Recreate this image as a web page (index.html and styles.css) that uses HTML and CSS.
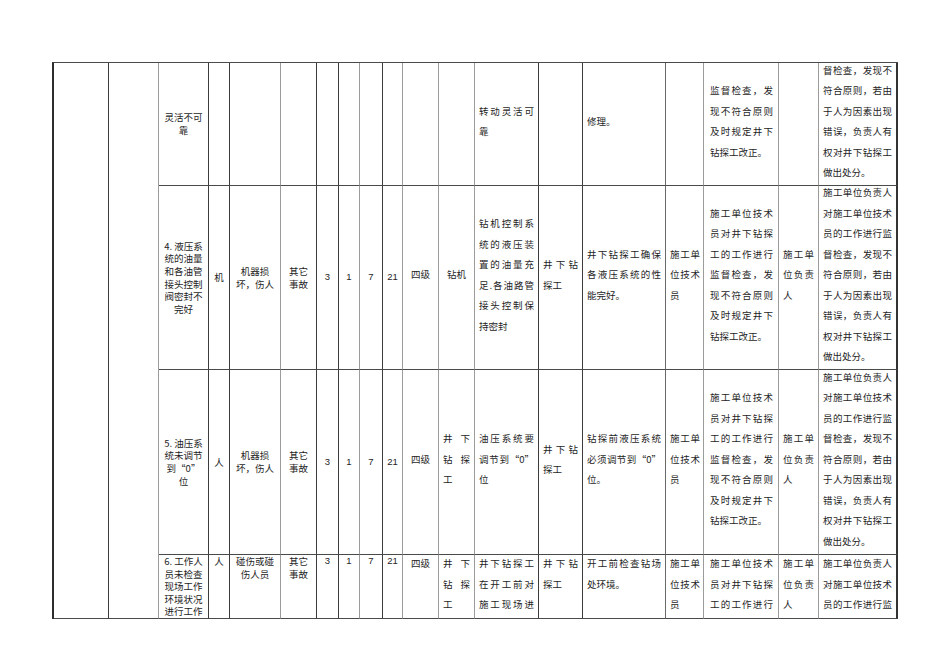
FILE: index.html
```html
<!DOCTYPE html>
<html lang="zh-CN">
<head>
<meta charset="utf-8">
<title>危险源辨识表</title>
<link rel="stylesheet" href="styles.css">
</head>
<body>
<div class="sheet">
  <div class="grid">
    <div class="c span"></div>
    <div class="c span"></div>

    <!-- row 1 -->
    <div class="c"><p class="t">灵活不可<br>靠</p></div>
    <div class="c"></div>
    <div class="c"></div>
    <div class="c"></div>
    <div class="c"></div>
    <div class="c"></div>
    <div class="c"></div>
    <div class="c"></div>
    <div class="c"></div>
    <div class="c"></div>
    <div class="c"><p class="l">转动灵活可靠</p></div>
    <div class="c"></div>
    <div class="c"><p class="l">修理。</p></div>
    <div class="c"></div>
    <div class="c"><p class="l">监督检查，发现不符合原则及时规定井下钻探工改正。</p></div>
    <div class="c"></div>
    <div class="c"><p class="l">督检查，发现不符合原则，若由于人为因素出现错误，负责人有权对井下钻探工做出处分。</p></div>

    <!-- row 2 -->
    <div class="c"><p class="t">4. 液压系<br>统的油量<br>和各油管<br>接头控制<br>阀密封不<br>完好</p></div>
    <div class="c"><p class="t">机</p></div>
    <div class="c"><p class="t">机器损<br>坏，伤人</p></div>
    <div class="c"><p class="t">其它<br>事故</p></div>
    <div class="c"><p class="n">3</p></div>
    <div class="c"><p class="n">1</p></div>
    <div class="c"><p class="n">7</p></div>
    <div class="c"><p class="n">21</p></div>
    <div class="c"><p class="l mid">四级</p></div>
    <div class="c"><p class="l mid">钻机</p></div>
    <div class="c"><p class="l">钻机控制系统的液压装置的油量充足.各油路管接头控制保持密封</p></div>
    <div class="c"><p class="l">井下钻探工</p></div>
    <div class="c"><p class="l">井下钻探工确保各液压系统的性能完好。</p></div>
    <div class="c"><p class="l">施工单位技术员</p></div>
    <div class="c"><p class="l">施工单位技术员对井下钻探工的工作进行监督检查，发现不符合原则及时规定井下钻探工改正。</p></div>
    <div class="c"><p class="l">施工单位负责人</p></div>
    <div class="c"><p class="l">施工单位负责人对施工单位技术员的工作进行监督检查，发现不符合原则，若由于人为因素出现错误，负责人有权对井下钻探工做出处分。</p></div>

    <!-- row 3 -->
    <div class="c"><p class="t">5. 油压系<br>统未调节<br>到“0”<br>位</p></div>
    <div class="c"><p class="t">人</p></div>
    <div class="c"><p class="t">机器损<br>坏，伤人</p></div>
    <div class="c"><p class="t">其它<br>事故</p></div>
    <div class="c"><p class="n">3</p></div>
    <div class="c"><p class="n">1</p></div>
    <div class="c"><p class="n">7</p></div>
    <div class="c"><p class="n">21</p></div>
    <div class="c"><p class="l mid">四级</p></div>
    <div class="c"><p class="l">井下钻探工</p></div>
    <div class="c"><p class="l">油压系统要调节到“0”位</p></div>
    <div class="c"><p class="l">井下钻探工</p></div>
    <div class="c"><p class="l">钻探前液压系统必须调节到“0”位。</p></div>
    <div class="c"><p class="l">施工单位技术员</p></div>
    <div class="c"><p class="l">施工单位技术员对井下钻探工的工作进行监督检查，发现不符合原则及时规定井下钻探工改正。</p></div>
    <div class="c"><p class="l">施工单位负责人</p></div>
    <div class="c"><p class="l">施工单位负责人对施工单位技术员的工作进行监督检查，发现不符合原则，若由于人为因素出现错误，负责人有权对井下钻探工做出处分。</p></div>

    <!-- row 4 (continues on the next page) -->
    <div class="c top"><p class="t">6. 工作人<br>员未检查<br>现场工作<br>环境状况<br>进行工作</p></div>
    <div class="c top"><p class="t">人</p></div>
    <div class="c top"><p class="t">碰伤或碰<br>伤人员</p></div>
    <div class="c top"><p class="t">其它<br>事故</p></div>
    <div class="c top"><p class="n">3</p></div>
    <div class="c top"><p class="n">1</p></div>
    <div class="c top"><p class="n">7</p></div>
    <div class="c top"><p class="n">21</p></div>
    <div class="c top"><p class="l mid">四级</p></div>
    <div class="c top"><p class="l">井下钻探工</p></div>
    <div class="c top"><p class="l cont">井下钻探工在开工前对施工现场进</p></div>
    <div class="c top"><p class="l">井下钻探工</p></div>
    <div class="c top"><p class="l">开工前检查钻场处环境。</p></div>
    <div class="c top"><p class="l">施工单位技术员</p></div>
    <div class="c top"><p class="l cont">施工单位技术员对井下钻探工的工作进行</p></div>
    <div class="c top"><p class="l">施工单位负责人</p></div>
    <div class="c top"><p class="l cont">施工单位负责人对施工单位技术员的工作进行监</p></div>
  </div>
</div>
</body>
</html>
```

FILE: styles.css
```css
html, body {
  margin: 0;
  padding: 0;
  background: #ffffff;
}

body {
  font-family: "Noto Sans CJK SC", "Liberation Sans", sans-serif;
  font-size: 9.5px;
  color: #1e1e1e;
}

.sheet {
  padding: 62px 0 0 52px;
}

.grid {
  display: grid;
  box-sizing: border-box;
  width: 846px;
  grid-template-columns: 55px 50px 50px 21px 51px 36px 22px 21px 23px 20px 36px 36px 64px 44px 83px 38px 75px 40px 79px;
  grid-template-rows: 123px 184px 185px 64px;
  border-left: 2px solid #2e2e2e;
  border-top: 1px solid #4a4a4a;
}

.c {
  box-sizing: border-box;
  display: flex;
  flex-direction: column;
  justify-content: center;
  overflow: hidden;
  border-right: 1px solid #3c3c3c;
  border-bottom: 1px solid #4a4a4a;
}

.c.top {
  justify-content: flex-start;
}

.span {
  grid-row: span 4;
}

/* lighter column rules */
.grid > :nth-child(2),
.grid > :nth-child(17n+5),
.grid > :nth-child(17n+8),
.grid > :nth-child(17n+10),
.grid > :nth-child(17n+11),
.grid > :nth-child(17n+12),
.grid > :nth-child(17n+16),
.grid > :nth-child(17n+17),
.grid > :nth-child(17n+18) {
  border-right-color: #9c9c9c;
}

.grid > :nth-child(17n+15) {
  border-right-color: #6a6a6a;
}

.grid > :nth-child(17n+19) {
  border-right: 2px solid #333333;
}

p {
  margin: 0;
}

/* compact centred text */
.t {
  text-align: center;
  line-height: 12.6px;
  padding: 0 2px;
}

/* numbers */
.n {
  font-family: "Liberation Sans", "Noto Sans CJK SC", sans-serif;
  text-align: center;
  line-height: 12.6px;
}

/* loose, justified text */
.l {
  text-align: justify;
  line-height: 20.5px;
  padding: 0 4px;
  margin: -3px 0 3px;
}

.top .l {
  margin: -2px 0 2px;
}

.l.mid {
  text-align: center;
}

/* paragraph that carries on past the page edge: last visible line stays spread */
.l.cont {
  text-align-last: justify;
}

.grid > :nth-child(17n+16) .l {
  padding: 0 3px 0 4px;
}

.grid > :nth-child(17n+17) .l {
  padding: 0 5px 0 6px;
}
```
